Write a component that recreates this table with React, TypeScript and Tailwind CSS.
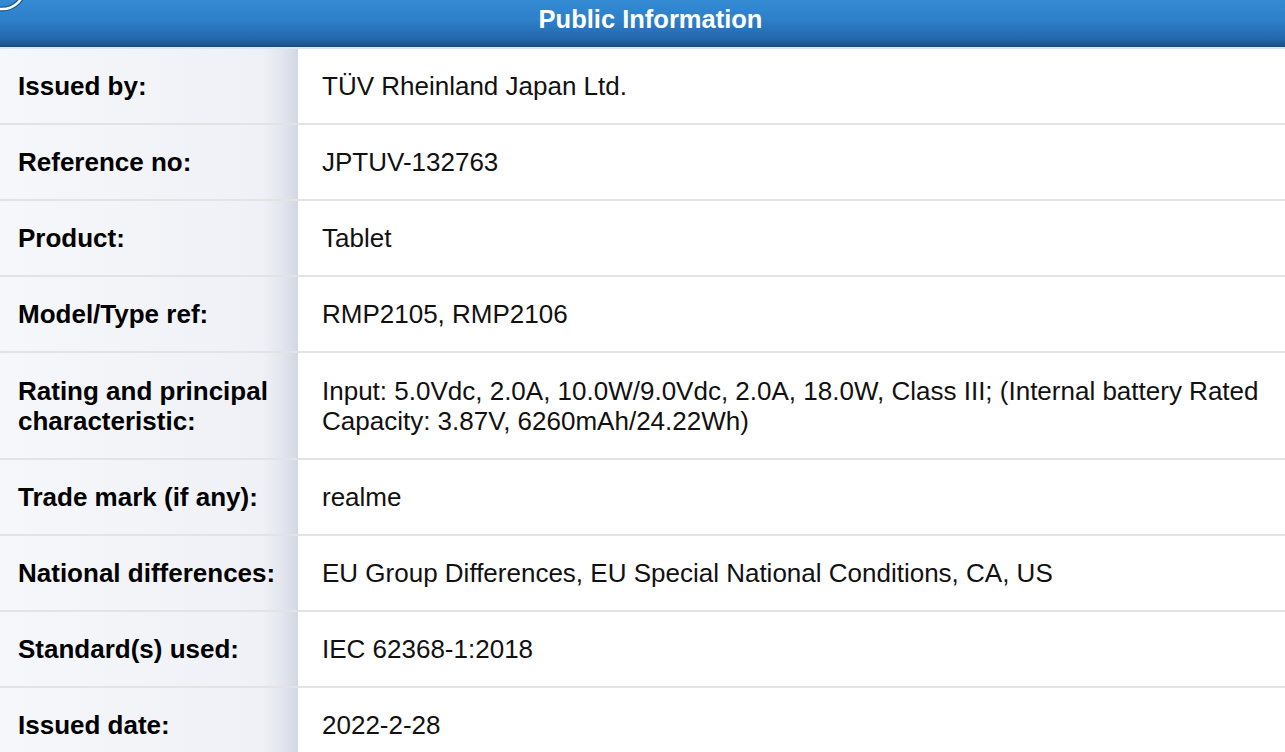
import React from "react";

const rows: { label: string; value: string; tall?: boolean }[] = [
  { label: "Issued by:", value: "TÜV Rheinland Japan Ltd." },
  { label: "Reference no:", value: "JPTUV-132763" },
  { label: "Product:", value: "Tablet" },
  { label: "Model/Type ref:", value: "RMP2105, RMP2106" },
  {
    label: "Rating and principal characteristic:",
    value:
      "Input: 5.0Vdc, 2.0A, 10.0W/9.0Vdc, 2.0A, 18.0W, Class III; (Internal battery Rated Capacity: 3.87V, 6260mAh/24.22Wh)",
    tall: true,
  },
  { label: "Trade mark (if any):", value: "realme" },
  { label: "National differences:", value: "EU Group Differences, EU Special National Conditions, CA, US" },
  { label: "Standard(s) used:", value: "IEC 62368-1:2018" },
  { label: "Issued date:", value: "2022-2-28" },
];

export default function App() {
  return (
    <div className="w-[1285px] h-[752px] overflow-hidden bg-white font-['Liberation_Sans',Arial,sans-serif]">
      {/* header bar */}
      <div className="relative h-[47px] bg-[linear-gradient(to_bottom,#338bd4_0%,#2d7fc8_45%,#2367ab_85%,#1c5189_100%)] border-b border-[#1a4a7c] flex items-center justify-center pl-[16px]">
        <svg className="absolute left-0 top-0" width="40" height="20" viewBox="0 0 40 20">
          <circle cx="2" cy="-14" r="23" fill="none" stroke="#1d5a96" strokeWidth="5" />
          <circle cx="2" cy="-14" r="23" fill="none" stroke="#ffffff" strokeWidth="2.5" />
        </svg>
        <h1 className="text-white font-bold text-[25.5px] leading-none -mt-[7px]">Public Information</h1>
      </div>
      <div className="h-[2px] bg-[#dbe6f3]" />

      {rows.map((r) => (
        <div
          key={r.label}
          className={`flex border-b-2 border-[#e3e3e5] ${r.tall ? "h-[107px]" : "h-[76px]"}`}
        >
          <div className="w-[298px] shrink-0 flex items-center pl-[18px] pr-[16px] bg-[linear-gradient(to_right,#f6f7fa_0%,#f0f1f6_88%,#e2e5ee_95%,#d3d7e4_100%)]">
            <span className="text-[26px] font-bold text-black leading-[30px]">{r.label}</span>
          </div>
          <div className="w-[2px] shrink-0 bg-white" />
          <div className="flex-1 flex items-center pl-[22px] pr-[18px]">
            <span className="text-[26px] text-[#111] leading-[30px]">{r.value}</span>
          </div>
        </div>
      ))}
    </div>
  );
}
